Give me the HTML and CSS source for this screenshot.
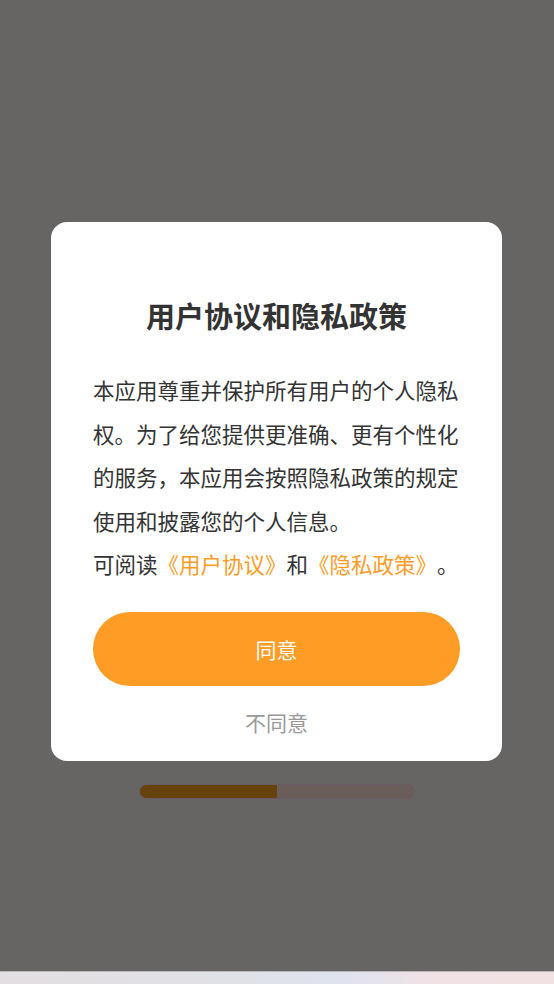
FILE: index.html
```html
<!DOCTYPE html>
<html lang="zh-CN">
<head>
<meta charset="utf-8">
<title>用户协议和隐私政策</title>
<link rel="stylesheet" href="styles.css">
</head>
<body>
<div class="screen">
  <main class="stage">
    <section class="dialog">
      <h1 class="title">用户协议和隐私政策</h1>
      <p class="body">本应用尊重并保护所有用户的个人隐私<br>权。为了给您提供更准确、更有个性化<br>的服务，本应用会按照隐私政策的规定<br>使用和披露您的个人信息。<br>可阅读<span class="link">《用户协议》</span>和<span class="link">《隐私政策》</span>。</p>
      <button class="agree">同意</button>
      <div class="disagree">不同意</div>
    </section>
    <div class="progress"><div class="fill" style="width:50%"></div></div>
  </main>
  <footer class="bottom"></footer>
</div>
</body>
</html>
```
FILE: styles.css
```css
html, body {
  margin: 0;
  padding: 0;
}
body {
  background: #666563;
  font-family: "Noto Sans CJK SC", "Noto Sans", sans-serif;
  text-spacing-trim: space-all;
}
.screen {
  height: 984px;
  display: flex;
  flex-direction: column;
}
.stage {
  flex: 1;
  display: flex;
  flex-direction: column;
  align-items: center;
  padding-top: 222px;
}
.dialog {
  width: 451px;
  box-sizing: border-box;
  background: #ffffff;
  border-radius: 16px;
  padding: 73px 42px 23px;
  display: flex;
  flex-direction: column;
  align-items: center;
  height: 539px;
  margin-right: 1px;
}
.title {
  margin: 0;
  font-size: 29px;
  line-height: 40px;
  font-weight: 700;
  color: #333333;
}
.body {
  margin: 33px 0 0;
  align-self: stretch;
  font-size: 21.5px;
  line-height: 43.5px;
  color: #333333;
  white-space: nowrap;
}
.link {
  color: #ff9c26;
}
.agree {
  margin-top: 26px;
  align-self: stretch;
  height: 74px;
  border: none;
  border-radius: 37px;
  background: #ff9c26;
  color: #ffffff;
  font-family: inherit;
  font-size: 21px;
  padding: 0;
}
.disagree {
  margin-top: 21px;
  font-size: 21px;
  line-height: 30px;
  color: #999999;
}
.progress {
  margin-top: 23px;
  width: 276px;
  height: 15px;
  box-sizing: border-box;
  border-radius: 8px;
  background: #6b5d59;
  border: 1px solid #6a5a64;
  overflow: hidden;
}
.fill {
  height: 100%;
  background: #66420c;
}
.bottom {
  height: 13px;
  border-top: 1px solid #b9b9bb;
  box-sizing: border-box;
  background: linear-gradient(90deg, #e3dee1 0%, #e0e1e6 40%, #dfe3ef 62%, #f1e1e5 78%, #f2e1e2 100%);
}
```
